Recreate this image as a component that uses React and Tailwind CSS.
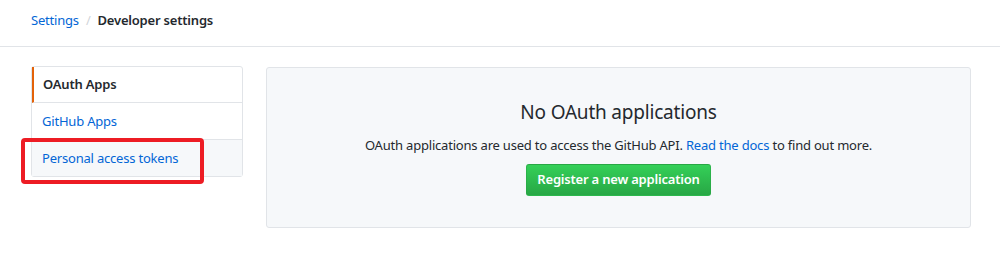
import React from "react";

export default function App() {
  return (
    <div className="w-[1000px] h-[256px] bg-white overflow-hidden relative tracking-[-0.2px]" style={{ fontFamily: '"Noto Sans", "Open Sans", sans-serif' }}>
      <div className="h-[47px] border-b border-[#e1e4e8] flex items-center pl-[31px] pb-[4px] text-[13px]">
        <span className="text-[#0366d6]">Settings</span>
        <span className="text-[#d1d5da] mx-[7px]">/</span>
        <span className="text-[#24292e] font-semibold">Developer settings</span>
      </div>
      <div className="flex pl-[31px] pt-[19px]">
        <div className="w-[212px] border border-[#e1e4e8] rounded-[3px] text-[13px] self-start">
          <div className="h-[36px] flex items-center pl-[9px] border-l-2 border-[#e36209] font-semibold text-[#24292e] border-b border-b-[#e1e4e8] pt-[1px]">OAuth Apps</div>
          <div className="h-[37px] flex items-center pl-[10px] text-[#0366d6] border-b border-[#e1e4e8] pt-[1px]">GitHub Apps</div>
          <div className="h-[36px] flex items-center pl-[10px] text-[#0366d6] bg-[#f6f8fa] pt-[1px]">Personal access tokens</div>
        </div>
        <div className="ml-[23px] w-[705px] h-[161px] mt-[1px] border border-[#e1e4e8] rounded-[3px] bg-[#f6f8fa] flex flex-col items-center">
          <div className="mt-[30px] text-[19px] text-[#24292e] leading-[28px]">No OAuth applications</div>
          <div className="mt-[9px] text-[13px] text-[#24292e] leading-[20px]">
            OAuth applications are used to access the GitHub API. <span className="text-[#0366d6]">Read the docs</span> to find out more.
          </div>
          <div className="mt-[9px] h-[32px] w-[185px] justify-center flex items-center rounded-[3px] border border-[#28a745]/60 text-white font-semibold text-[13px] bg-gradient-to-b from-[#34d058] to-[#28a745]">
            Register a new application
          </div>
        </div>
      </div>
      <div className="absolute left-[21px] top-[138px] w-[183px] h-[46px] border-[4px] border-[#ed1c24] rounded-[4px]" />
    </div>
  );
}
